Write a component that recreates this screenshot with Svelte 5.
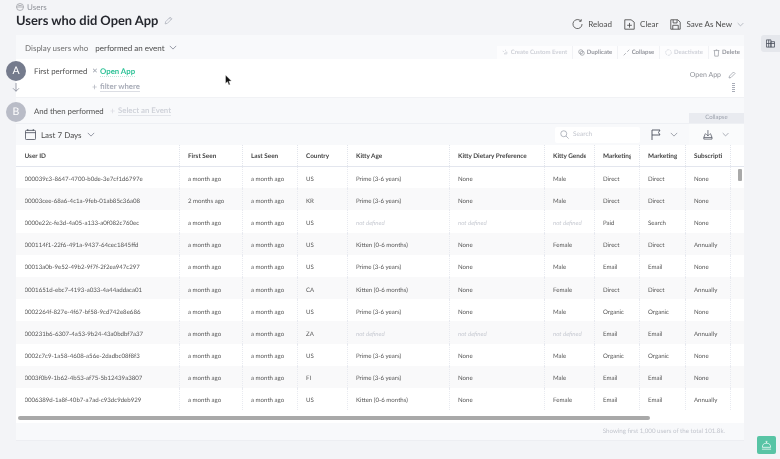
<script>
  const cols = [
    { label: 'User ID', w: 163 },
    { label: 'First Seen', w: 63 },
    { label: 'Last Seen', w: 55 },
    { label: 'Country', w: 50 },
    { label: 'Kitty Age', w: 102 },
    { label: 'Kitty Dietary Preference', w: 95 },
    { label: 'Kitty Gender', w: 50 },
    { label: 'Marketing Channel', w: 45 },
    { label: 'Marketing Source', w: 46 },
    { label: 'Subscription', w: 45 },
    { label: '', w: 14 }
  ]

  const nd = 'not defined'
  const prime = 'Prime (3-6 years)'
  const kitten = 'Kitten (0-6 months)'
  const rows = [
    ['000039c3-8647-4700-b0de-3e7cf1d6797e', 'a month ago', 'US', prime, 'None', 'Male', 'Direct', 'Direct', 'None'],
    ['00003cee-68a6-4c1a-9feb-01ab85c36a08', '2 months ago', 'KR', prime, 'None', 'Male', 'Direct', 'Direct', 'None'],
    ['0000e22c-fe3d-4a05-a133-a0f082c760ec', 'a month ago', 'US', nd, nd, nd, 'Paid', 'Search', 'None'],
    ['000114f1-22f6-491a-9437-64cec1845ffd', 'a month ago', 'US', kitten, 'None', 'Female', 'Direct', 'Direct', 'Annually'],
    ['00013a0b-9e52-49b2-9f7f-2f2ea947c297', 'a month ago', 'US', prime, 'None', 'Male', 'Email', 'Email', 'None'],
    ['0001651d-ebc7-4193-a033-4a44addaca01', 'a month ago', 'CA', kitten, 'None', 'Female', 'Direct', 'Direct', 'Annually'],
    ['0002264f-827e-4f67-bf58-9cd742e8e686', 'a month ago', 'US', prime, 'None', 'Male', 'Organic', 'Organic', 'None'],
    ['000231b6-6307-4a53-9b24-43a0bdbf7a37', 'a month ago', 'ZA', nd, nd, nd, 'Email', 'Email', 'Annually'],
    ['0002c7c9-1a58-4608-a56e-2dadbc08f8f3', 'a month ago', 'US', prime, 'None', 'Male', 'Organic', 'Organic', 'None'],
    ['0003f0b9-1b62-4b53-af75-5b12439a3807', 'a month ago', 'FI', prime, 'None', 'Male', 'Email', 'Email', 'None'],
    ['0006389d-1a8f-40b7-a7ad-c93dc9deb929', 'a month ago', 'US', kitten, 'None', 'Female', 'Email', 'Email', 'Annually']
  ]

  // last seen is the same for every row
  const cells = rows.map((r) => [r[0], r[1], 'a month ago', ...r.slice(2), ''])
</script>

<div class="page">
  <header class="top">
    <div class="titles">
      <div class="crumb">
        <svg width="8" height="8" viewBox="0 0 16 16" fill="none" stroke="currentColor" stroke-width="1.3"><circle cx="8" cy="8" r="7" /><path d="M1 8h14M4 4c2 1.5 6 1.5 8 0" /></svg>
        Users
      </div>
      <div class="title">
        <h1>Users who did Open App</h1>
        <svg width="9" height="9" viewBox="0 0 16 16" fill="none" stroke="#a9adb8" stroke-width="1.3"><path d="M2 14l1-4 8-8 3 3-8 8zM9.500 3.500l3 3" /></svg>
      </div>
    </div>
    <div class="actions">
      <button>
        <svg width="11" height="12" viewBox="0 0 16 16" fill="none" stroke="currentColor" stroke-width="1.2"><path d="M13 3.800A6.600 6.600 0 1 0 14.600 8M13.400 1v3h-3" /></svg>
        Reload
      </button>
      <button>
        <svg width="11" height="11" viewBox="0 0 14 14" fill="none" stroke="currentColor" stroke-width="1.100"><path d="M1 1h8l4 3v9H1zM7 5v6M4 8h6" /></svg>
        Clear
      </button>
      <button>
        <svg width="11" height="11" viewBox="0 0 14 14" fill="none" stroke="currentColor" stroke-width="1.100"><path d="M1 1h9l3 3v9H1zM4 1v4h5V1M3.500 13V8h7v5" /></svg>
        Save As New
        <svg width="7" height="5" viewBox="0 0 10 6" fill="none" stroke="#9ea3ae"><path d="M1 1l4 4 4-4" /></svg>
      </button>
    </div>
  </header>

  <div class="work">
    <section class="panel">
      <div class="display">
        <div class="who">
          <span class="muted">Display users who</span>
          <span class="sel">performed an event</span>
          <svg width="8" height="5" viewBox="0 0 10 6" fill="none" stroke="#7d8290"><path d="M1 1l4 4 4-4" /></svg>
        </div>
        <div class="tools">
          <span class="tool faint w-custom">
            <svg width="7" height="7" viewBox="0 0 10 10" fill="none" stroke="currentColor"><path d="M1 3l2 1M5 1v2M7 7V4L3 7z" /></svg>
            Create Custom Event
          </span>
          <span class="tool w-dup">
            <svg width="7" height="7" viewBox="0 0 10 10" fill="none" stroke="currentColor"><circle cx="4" cy="4" r="3" /><circle cx="6" cy="6" r="3" /></svg>
            Duplicate
          </span>
          <span class="tool w-col">
            <svg width="7" height="7" viewBox="0 0 10 10" fill="none" stroke="currentColor"><path d="M1 9l3-3M6 4l3-3" /></svg>
            Collapse
          </span>
          <span class="tool faint w-deact">
            <svg width="7" height="7" viewBox="0 0 10 10" fill="none" stroke="currentColor"><circle cx="5" cy="5" r="4" stroke-dasharray="3 1" /></svg>
            Deactivate
          </span>
          <span class="tool w-del">
            <svg width="7" height="8" viewBox="0 0 10 11" fill="none" stroke="currentColor"><path d="M1 2h8M4 1h2M2 2l.5 8h5L8 2" /></svg>
            Delete
          </span>
        </div>
      </div>

      <div class="step active">
        <span class="badge a">A</span>
        <svg class="arrow" width="8" height="9" viewBox="0 0 10 12" fill="none" stroke="#7d8290"><path d="M5 0v11M1 7l4 4 4-4" /></svg>
        <div class="step-body">
          <div class="line">
            <span class="label">First performed</span>
            <span class="x">✕</span>
            <span class="event">Open App</span>
          </div>
          <div class="line sub">
            <span class="plus">+</span>
            <span class="filter">filter where</span>
          </div>
        </div>
        <div class="step-side">
          <div class="named">
            Open App
            <svg width="8" height="8" viewBox="0 0 16 16" fill="none" stroke="#8b8f9b" stroke-width="1.300"><path d="M2 14l1-4 8-8 3 3-8 8z" /></svg>
          </div>
          <div class="grip"></div>
        </div>
      </div>

      <div class="step next">
        <span class="badge b">B</span>
        <div class="line">
          <span class="label">And then performed</span>
          <span class="plus light">+</span>
          <span class="select">Select an Event</span>
        </div>
        <span class="collapse-tab">Collapse</span>
      </div>

      <div class="filters">
        <div class="range">
          <svg width="11" height="11" viewBox="0 0 12 12" fill="none" stroke="#4a4f5c" stroke-width=".9"><rect x=".5" y="1.500" width="11" height="10" rx="1" /><path d="M.5 4h11M3 0v2M9 0v2" /></svg>
          <span>Last 7 Days</span>
          <svg width="8" height="5" viewBox="0 0 10 6" fill="none" stroke="#7d8290"><path d="M1 1l4 4 4-4" /></svg>
        </div>
        <div class="right">
          <div class="search">
            <svg width="9" height="9" viewBox="0 0 12 12" fill="none" stroke="#9ea3ae"><circle cx="5" cy="5" r="4" /><path d="M8 8l3.500 3.500" /></svg>
            <span>Search</span>
          </div>
          <div class="icon-pair flag">
            <svg width="10" height="11" viewBox="0 0 10 11" fill="none" stroke="#4a4f5c" stroke-width=".9"><path d="M1 11V1h8L7.500 3.500 9 6H1" /></svg>
            <svg width="8" height="5" viewBox="0 0 10 6" fill="none" stroke="#8b8f9b"><path d="M1 1l4 4 4-4" /></svg>
          </div>
          <div class="icon-pair dl">
            <svg width="11" height="12" viewBox="0 0 12 12" fill="none" stroke="#4a4f5c" stroke-width=".9"><path d="M6 0v7M4 5l2 2 2-2M3 4L1 9h10L9 4M1 9v2h10V9" /></svg>
            <svg width="8" height="5" viewBox="0 0 10 6" fill="none" stroke="#8b8f9b"><path d="M1 1l4 4 4-4" /></svg>
          </div>
        </div>
      </div>

      <div class="grid-wrap">
        <table>
          <colgroup>
            {#each cols as c}<col style="width: {c.w}px" />{/each}
          </colgroup>
          <thead>
            <tr>
              {#each cols as c}<th><div class="clip">{c.label}</div></th>{/each}
            </tr>
          </thead>
          <tbody>
            {#each cells as row}
              <tr>
                {#each row as cell}
                  <td class:nd={cell === nd}><div class="clip">{cell}</div></td>
                {/each}
              </tr>
            {/each}
          </tbody>
        </table>
        <div class="vbar"></div>
      </div>

      <div class="hscroll"><div class="thumb"></div></div>

      <footer class="foot">Showing first 1,000 users of the total 101.8k.</footer>
    </section>

    <aside class="rail">
      <div class="rail-btn">
        <svg width="9" height="9" viewBox="0 0 10 10" fill="none" stroke="#4a4f5c" stroke-width=".9"><path d="M.5 1h5v8h-5zM.5 5h9M5.500 3h4v6h-4zM3 1v8" /></svg>
      </div>
    </aside>
  </div>

  <svg class="cursor" width="7" height="11" viewBox="0 0 7 11"><path d="M.5 0v8.500l2-1.800L3.800 10l1.400-.6L3.900 6.300 6.500 6z" fill="#111" stroke="#fff" stroke-width=".4" /></svg>

  <div class="help">
    <svg width="11" height="11" viewBox="0 0 12 12" fill="none" stroke="#fff" stroke-width=".8"><path d="M1.500 8a4.500 4.500 0 0 1 9 0zM6 3.500V2M5 1.500h2M1 10h10" /></svg>
  </div>
</div>

<style>
  :global(body) {
    margin: 0;
    background: #f3f4f7;
    font-family: Lato, "Liberation Sans", sans-serif;
    color: #4d4d4d;
    overflow: hidden;
    text-rendering: geometricPrecision;
  }

  .page {
    position: relative;
    height: 459px;
    overflow: hidden;
    filter: blur(0.25px);
    will-change: transform;
  }

  .cursor {
    position: absolute;
    left: 225px;
    top: 75px;
  }

  .top {
    display: flex;
    justify-content: space-between;
    height: 35px;
    padding: 2px 36px 0 16px;
    box-sizing: border-box;
  }

  .crumb {
    display: flex;
    align-items: center;
    gap: 3px;
    font-size: 8px;
    height: 10px;
    color: #8f9299;
  }

  .title {
    display: flex;
    align-items: center;
    gap: 6px;
  }

  h1 {
    margin: 0;
    font-size: 12.900px;
    line-height: 16px;
    font-weight: 700;
    color: #26282f;
  }

  .actions {
    display: flex;
    align-items: center;
    gap: 12px;
    margin-top: 15px;
    height: 14px;
  }

  .actions button {
    display: flex;
    align-items: center;
    gap: 5px;
    padding: 0;
    border: 0;
    background: none;
    font: inherit;
    font-size: 8px;
    color: #4d4d4d;
  }

  .work {
    display: flex;
    gap: 17px;
    padding-left: 16px;
  }

  .panel {
    width: 728px;
    flex: none;
    background: #f8f9fb;
  }

  .display {
    display: flex;
    justify-content: space-between;
    align-items: flex-end;
    height: 24px;
    box-sizing: border-box;
  }

  .who {
    display: flex;
    align-items: center;
    gap: 7px;
    align-self: center;
    padding: 1px 0 0 9px;
    font-size: 8px;
  }

  .muted {
    color: #707070;
  }

  .sel {
    color: #4d4d4d;
    margin-right: -3px;
  }

  .tools {
    display: flex;
    gap: 1px;
    height: 13px;
    background: #f1f2f5;
  }

  .tool {
    display: flex;
    align-items: center;
    justify-content: center;
    gap: 2px;
    background: #fdfdfe;
    font-size: 6px;
    font-weight: 700;
    color: #94969d;
  }

  .w-custom { width: 75px; }
  .w-dup { width: 44px; }
  .w-col { width: 41px; }
  .w-deact { width: 48px; }
  .w-del { width: 35px; }

  .tool.faint {
    color: #cfd1d8;
  }

  .step {
    position: relative;
    display: flex;
    justify-content: space-between;
  }

  .active {
    height: 38px;
    background: #fff;
  }

  .badge {
    position: absolute;
    left: -10px;
    width: 20px;
    height: 20px;
    border-radius: 50%;
    display: flex;
    align-items: center;
    justify-content: center;
    font-size: 10.500px;
    color: #fff;
  }

  .badge.a {
    top: 2px;
    background: #757b8d;
  }

  .badge.b {
    top: 4px;
    background: #b9bcc7;
  }

  .arrow {
    position: absolute;
    left: -4px;
    top: 24px;
  }

  .step-body {
    padding: 4.500px 0 0 18px;
  }

  .line {
    display: flex;
    align-items: center;
    font-size: 7.800px;
    height: 15px;
  }

  .label {
    color: #4d4d4d;
    width: 58px;
  }

  .next .label {
    width: 76px;
  }

  .x {
    color: #9ea3ae;
    font-size: 7px;
    width: 8px;
  }

  .event {
    color: #2fc297;
    font-weight: 700;
    border-bottom: 1px dotted #bfe9dc;
  }

  .sub {
    padding-left: 58px;
  }

  .plus {
    color: #a9adb8;
    width: 8px;
    font-size: 9px;
  }

  .plus.light {
    color: #d7d9e0;
  }

  .filter {
    color: #a9adb8;
    font-weight: 700;
    border-bottom: 1px solid #dcdee4;
  }

  .select {
    color: #d0d3da;
    font-weight: 700;
    border-bottom: 1px solid #e4e6eb;
  }

  .step-side {
    padding: 12px 8px 0 0;
    display: flex;
    flex-direction: column;
    align-items: flex-end;
  }

  .named {
    display: flex;
    align-items: center;
    gap: 7px;
    font-size: 7px;
    color: #8f9299;
  }

  .grip {
    width: 3px;
    height: 10px;
    margin: 4px 1px 0 0;
    background: repeating-linear-gradient(#a9adb8 0 1px, transparent 1px 2px);
  }

  .next {
    height: 26px;
    align-items: center;
    justify-content: flex-start;
    padding-left: 18px;
    border-top: 1px solid #f1f2f5;
    box-sizing: border-box;
    background: #f8f9fb;
  }

  .collapse-tab {
    position: absolute;
    right: 0;
    bottom: 0;
    width: 55px;
    height: 10px;
    background: #e9ebf0;
    color: #9ea3ae;
    font-size: 6px;
    text-align: center;
    line-height: 10px;
  }

  .filters {
    display: flex;
    justify-content: space-between;
    align-items: center;
    height: 22px;
    padding-left: 9px;
    border-top: 1px solid #eef0f4;
    box-sizing: border-box;
  }

  .range {
    display: flex;
    align-items: center;
    gap: 5px;
    font-size: 8px;
  }

  .right {
    display: flex;
    align-items: center;
    height: 100%;
  }

  .search {
    display: flex;
    align-items: center;
    gap: 4px;
    width: 85px;
    height: 16px;
    box-sizing: border-box;
    padding-left: 5px;
    background: #fff;
    border-radius: 2px;
    font-size: 6.500px;
    color: #c2c5cd;
  }

  .icon-pair {
    display: flex;
    align-items: center;
    height: 100%;
  }

  .flag {
    gap: 9px;
    padding: 0 11px;
    width: 49px;
    box-sizing: border-box;
  }

  .dl {
    gap: 9px;
    width: 55px;
    box-sizing: border-box;
    padding: 0 15px 0 14px;
    background: #fafbfc;
  }

  .grid-wrap {
    position: relative;
    height: 266px;
    overflow: hidden;
    background: #fff;
  }

  table {
    width: 728px;
    table-layout: fixed;
    border-collapse: collapse;
  }

  th {
    height: 21px;
    padding: 3px 8px 0 8.500px;
    box-sizing: border-box;
    text-align: left;
    font-size: 6.400px;
    font-weight: 700;
    color: #444;
    border-bottom: 1px solid #e3e6ee;
    border-right: 1px dotted #e2e5ec;
    background: #fff;
  }

  td {
    height: 22.200px;
    padding: 4px 4px 0 8.500px;
    box-sizing: border-box;
    font-size: 6.100px;
    color: #555;
    border-right: 1px dotted #e8eaf0;
  }

  th:last-child,
  td:last-child {
    border-right: 0;
  }

  tbody tr:nth-child(even) td {
    background: #f9f9fa;
  }

  td.nd {
    font-style: italic;
    color: #c7cad2;
  }

  .clip {
    white-space: nowrap;
    overflow: hidden;
  }

  .vbar {
    position: absolute;
    right: 2px;
    top: 24px;
    width: 4px;
    height: 12px;
    border-radius: 1px;
    background: #a9a9a9;
  }

  .hscroll {
    height: 12px;
    background: #fff;
    padding-top: 5px;
    box-sizing: border-box;
  }

  .thumb {
    width: 632px;
    height: 4px;
    margin-left: 2px;
    border-radius: 2px;
    background: #a9a9a9;
  }

  .foot {
    height: 18px;
    line-height: 18px;
    padding-right: 19px;
    text-align: right;
    font-size: 6.200px;
    color: #c2c5cd;
    border-bottom: 1px solid #edeef2;
    box-sizing: border-box;
  }

  .rail-btn {
    width: 19px;
    height: 17px;
    display: flex;
    align-items: center;
    justify-content: center;
    background: #e5e7ec;
    border-radius: 3px 0 0 3px;
  }

  .help {
    position: absolute;
    right: 4px;
    bottom: 5px;
    width: 19px;
    height: 18px;
    display: flex;
    align-items: center;
    justify-content: center;
    border-radius: 2px;
    background: #58c4a5;
  }
</style>
